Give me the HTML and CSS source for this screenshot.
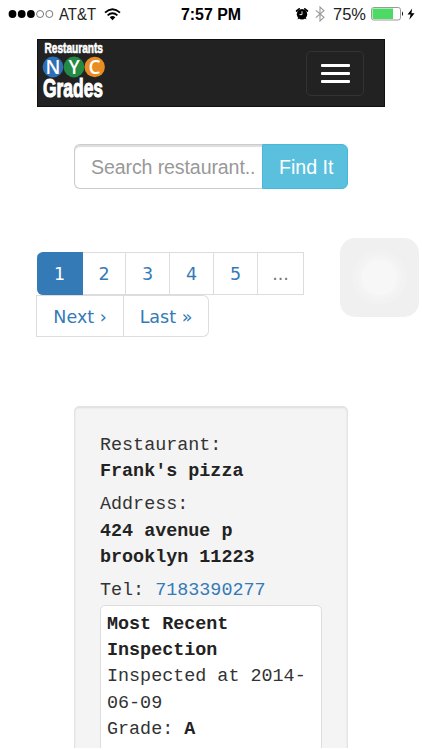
FILE: index.html
```html
<!DOCTYPE html>
<html lang="en">
<head>
<meta charset="utf-8">
<meta name="viewport" content="width=device-width, initial-scale=1">
<title>Restaurants NYC Grades</title>
<link rel="stylesheet" href="styles.css">
</head>
<body>
<div class="screen">
  <header class="status">
    <div class="status-left">
      <svg class="signal" width="46" height="10" viewBox="0 0 46 10"><g fill="#000"><circle cx="4.5" cy="5" r="3.9"/><circle cx="13.7" cy="5" r="3.9"/><circle cx="22.9" cy="5" r="3.9"/></g><g fill="none" stroke="#555" stroke-width=".8"><circle cx="32.1" cy="5" r="3.5"/><circle cx="41.3" cy="5" r="3.5"/></g></svg>
      <svg class="carrier" width="38" height="20"><text x="0" y="15.5" textLength="37" lengthAdjust="spacingAndGlyphs">AT&amp;T</text></svg>
      <svg class="wifi" width="17" height="13" viewBox="0 0 17 13"><g fill="none" stroke="#000" stroke-width="1.8"><path d="M1 4.6Q8.5-2 16 4.6"/><path d="M3.6 7.4Q8.5 3.1 13.4 7.4"/></g><path d="M5.7 9.3Q8.5 6.8 11.3 9.3L8.5 12.2Z"/></svg>
    </div>
    <svg class="clock" width="64" height="20"><text x="1" y="15.5" textLength="60" lengthAdjust="spacingAndGlyphs">7:57 PM</text></svg>
    <div class="status-right">
      <svg class="alarm" width="14" height="14" viewBox="0 0 14 14"><circle cx="7" cy="7.3" r="5.2"/><path d="M1.6 4 4.2 1.9M12.4 4 9.8 1.9" stroke="#000" stroke-width="1.7" stroke-linecap="round"/><path d="M3.7 11 2.9 12.2M10.3 11 11.1 12.2" stroke="#000"/><path d="M7 4.3V7.6H4.5" fill="none" stroke="#fff" stroke-width=".9"/></svg>
      <svg class="bluetooth" width="10" height="16" viewBox="0 0 10 16"><path d="M.8 4.3 9 11.3 5 15V1l4 3.7-8.2 7" fill="none" stroke="#999" stroke-width="1.1"/></svg>
      <svg class="percent" width="34" height="20"><text x="0" y="15.5" textLength="33" lengthAdjust="spacingAndGlyphs">75%</text></svg>
      <svg class="battery" width="33" height="14" viewBox="0 0 33 14"><rect x=".5" y=".5" width="29" height="12.5" rx="2.3" fill="#fff" stroke="#999"/><path d="M2.5 1.5H22V12H2.5Q1.5 12 1.5 11V2.5Q1.5 1.5 2.5 1.5Z" fill="#4cd964"/><path d="M31 4.2Q33 6.7 31 9.2Z"/></svg>
      <svg class="bolt" width="8" height="12" viewBox="0 0 8 12"><path d="M5.2.5.5 6.6H3.6L2.3 11.7 7.6 5.2H4.4Z"/></svg>
    </div>
  </header>

  <nav class="navbar">
    <svg class="logo" width="70" height="66" viewBox="0 0 70 66" role="img" aria-label="Restaurants NYC Grades">
      <text class="small-word" transform="translate(7.5 13) scale(1 1.05)" x="0" y="0" textLength="58.5" lengthAdjust="spacingAndGlyphs">Restaurants</text>
      <circle cx="16" cy="27" r="10.4" fill="#2d70b7"/><circle cx="37" cy="27" r="10.4" fill="#238943"/><circle cx="57.7" cy="27" r="10.2" fill="#e88d24"/>
      <g class="logo-letters"><text x="16" y="33.7">N</text><text x="37" y="33.7">Y</text><text x="57.5" y="33.7">C</text></g>
      <text class="big-word" transform="translate(6 57.3) scale(1 1.38)" x="0" y="0" textLength="60" lengthAdjust="spacingAndGlyphs">Grades</text>
    </svg>
    <button class="toggle" aria-label="Menu"><i></i><i></i><i></i></button>
  </nav>

  <form class="search">
    <div class="field">Search restaurant..</div>
    <div class="find">Find It</div>
  </form>

  <ul class="pages">
    <li class="active">1</li><li>2</li><li class="w44">3</li><li class="w44">4</li><li class="w44">5</li><li class="gap">...</li>
  </ul>
  <ul class="pages second">
    <li class="next">Next ›</li><li class="last">Last »</li>
  </ul>

  <main class="card">
    <p>Restaurant:<br><b>Frank's pizza</b></p>
    <p>Address:<br><b>424 avenue p<br>brooklyn 11223</b></p>
    <p>Tel: <a>7183390277</a></p>
    <section class="recent"><b>Most Recent<br>Inspection</b><br>Inspected at 2014<span>-</span><br>06-09<br>Grade: <b>A</b></section>
  </main>
  <div class="assist"></div>
</div>
</body>
</html>
```
FILE: styles.css
```css
* { box-sizing: border-box; }
body { margin: 0; background: #fff; }
.screen { position: relative; width: 422px; height: 748px; overflow: hidden; font-family: "Liberation Sans", sans-serif; }
.status { display: flex; height: 39px; padding-top: 4px; }
.status svg { display: block; flex: none; overflow: visible; }
.status-left, .status-right { display: flex; align-items: center; height: 20px; }
.status-left { width: 180px; padding-left: 8px; }
.carrier { margin-left: 5px; }
.wifi { margin-left: 7px; }
.carrier text, .percent text { font-size: 16px; fill: #222; }
.clock text { font-size: 16px; font-weight: bold; fill: #000; }
.status-right { width: 127px; margin-left: auto; }
.bluetooth { margin-left: 6px; }
.percent { margin-left: 8px; }
.battery { margin-left: 4px; }
.bolt { margin-left: 3px; }

.navbar { display: flex; justify-content: space-between; width: 348px; height: 68px; margin-left: 37px; background: #222; border: 1px solid #101010; }
.logo { display: block; flex: none; margin-left: -1px; overflow: visible; }
.logo text { font-family: "Liberation Sans", sans-serif; font-weight: bold; fill: #fff; }
.logo .small-word { font-size: 14px; stroke: #fff; stroke-width: .6px; }
.logo .big-word { font-size: 19px; stroke: #fff; stroke-width: .8px; }
.logo-letters { text-anchor: middle; }
.logo .logo-letters text { font-family: "Open Sans", sans-serif; font-size: 19px; font-weight: 600; }
.toggle { display: flex; flex-direction: column; align-items: center; justify-content: center; gap: 5px; width: 58px; height: 45px; margin: 11px 20px 0 0; padding: 0; background: transparent; border: 1px solid #333; border-radius: 5px; }
.toggle i { display: block; width: 29px; height: 3px; border-radius: 1px; background: #fff; }

.search { display: flex; width: 274px; height: 45px; margin: 37px 0 0 74px; font-size: 19.6px; line-height: 45px; white-space: nowrap; }
.field { width: 188px; padding-left: 16px; color: #999; border: 1px solid #ccc; border-right: 0; border-radius: 6px 0 0 6px; box-shadow: inset 0 2px 1px #ddd; letter-spacing: -.12px; }
.find { width: 86px; padding-left: 16px; color: #fff; background: #5bc0de; border: 1px solid #46b8da; border-radius: 0 6px 6px 0; }

.pages { display: flex; height: 43px; margin: 63px 0 0 37px; padding: 0; list-style: none; font: 17.5px/43px "DejaVu Sans", sans-serif; color: #337ab7; text-align: center; }
.pages li { width: 43px; border: 1px solid #ddd; border-left: 0; height: 43px; white-space: pre; }
.pages .active { width: 46px; background: #337ab7; border-color: #337ab7; color: #fff; border-radius: 6px 0 0 6px; }
.pages .w44 { width: 44px; }
.pages .gap { width: 46px; color: #777; }
.pages.second { height: 42px; margin: 0 0 0 36px; }
.pages.second li { height: 42px; line-height: 42px; }
.pages .next { width: 88px; border-left: 1px solid #ddd; }
.pages .last { width: 85px; border-radius: 0 6px 6px 0; }

.card { width: 274px; height: 380px; margin: 69px 0 0 74px; padding: 26px 25px 0; background: #f4f4f4; border: 1px solid #e3e3e3; border-radius: 5px; box-shadow: inset 0 1px 2px #ddd; color: #333; font: 18.4px/26.4px "Liberation Mono", monospace; }
.card b { color: #222; }
.card p { margin: 0 0 6.6px; white-space: nowrap; }
.card p:nth-of-type(3) { margin-bottom: 0; }
.card a { color: #337ab7; }
.recent { width: 222px; height: 170px; padding: 6px 0 0 6px; background: #fff; border: 1px solid #ddd; border-radius: 5px; white-space: nowrap; }
.assist { position: absolute; left: 340px; top: 238px; width: 79px; height: 79px; border-radius: 15px; background: radial-gradient(circle, #f7f7f7 0 17px, #f4f4f4 19px 21px, #f2f2f2 23px 26px, #f0f0f0 28px); }
```
